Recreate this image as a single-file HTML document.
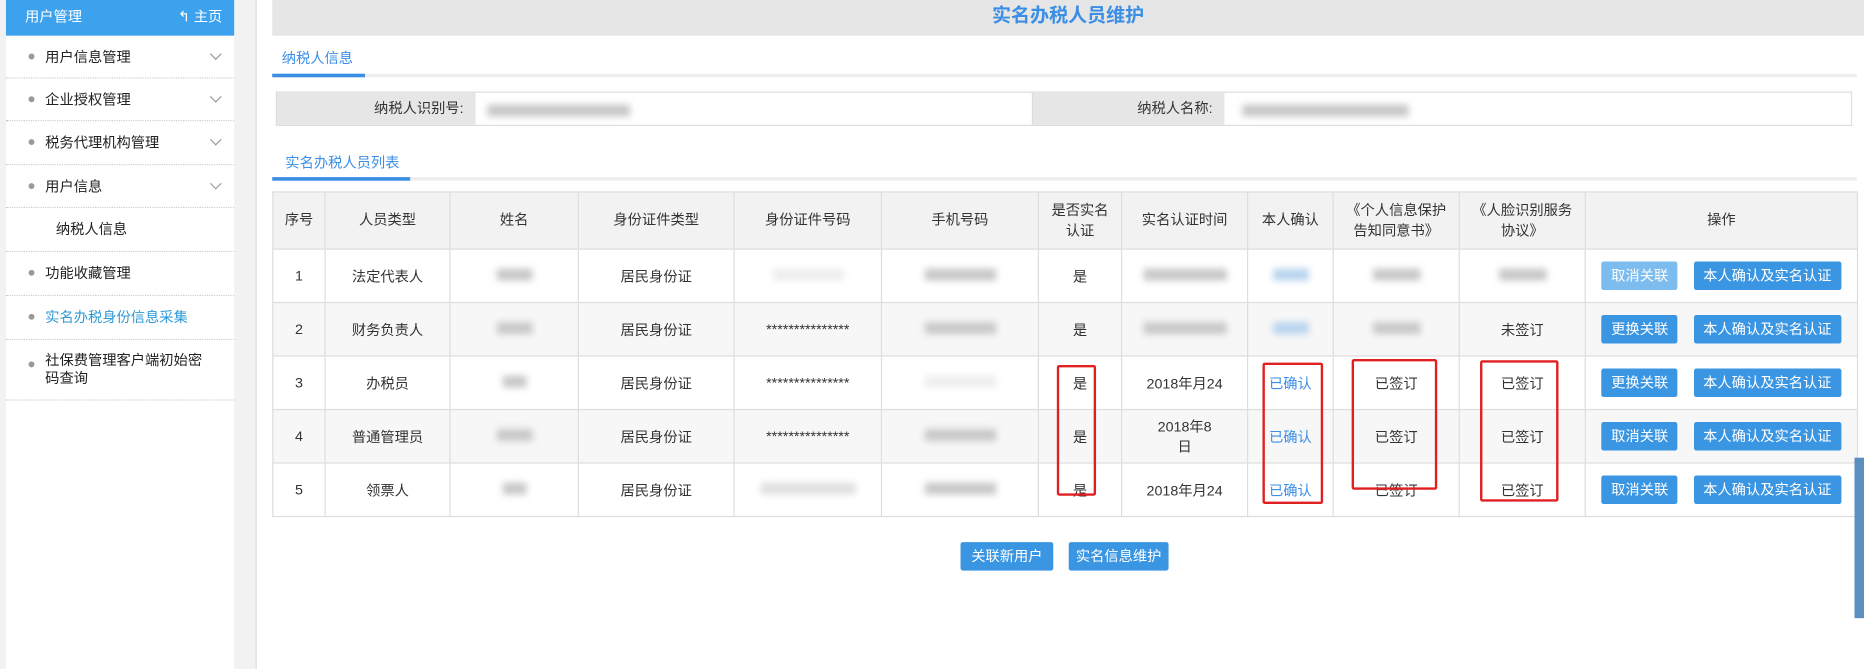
<!DOCTYPE html>
<html><head><meta charset="utf-8"><style>
*{margin:0;padding:0;box-sizing:border-box}
html,body{width:1864px;height:669px;overflow:hidden;background:#f2f2f2}
body{font-family:"Liberation Sans","Noto Sans CJK SC",sans-serif;font-size:12px;color:#333}
#w{position:absolute;left:0;top:0;width:1568px;height:563px;transform:scale(1.18878);transform-origin:0 0;background:#f2f2f2}
.a{position:absolute}
.side{left:5px;top:0;width:192px;height:563px;background:#fff}
.sh{left:0;top:0;width:192px;height:30px;background:#3ca2ee;color:#fff;font-size:12px;line-height:28px;padding-left:16px}
.it{position:absolute;left:0;width:192px;border-bottom:1px dotted #ccc;padding-left:33px;font-size:12px;color:#222}
.it:before{content:"";position:absolute;left:19px;top:50%;margin-top:-3px;width:5px;height:5px;border-radius:50%;background:#999}
.it.nb:before{display:none}
.it.tw:before{top:18px;margin-top:0}
.chev{position:absolute;right:12px;top:50%;margin-top:-6px;width:7px;height:7px;border-right:1px solid #999;border-bottom:1px solid #999;transform:rotate(45deg)}
.main{left:215px;top:0;width:1353px;height:563px;background:#fff;border-left:1px solid #ddd}
.bl{background:#e6e6e6}
table{border-collapse:collapse;position:absolute;left:229px;top:161px;width:1334px}
td,th{border:1px solid #ddd;text-align:center;font-weight:normal;font-size:12px;color:#333}
th{background:#f2f2f2;height:48px;line-height:17px}
td{height:45px;background:#fff}
tr.g td{background:#f7f7f7}
.btn{display:inline-block;background:#3a96e2;color:#fff;border-radius:2px;height:24px;line-height:24px;padding:0 8px;font-size:12px}
.lt{background:#7cbcee}
.blur{display:inline-block;background:#c8c8c8;filter:blur(3px);height:10px}
.red{position:absolute;border:2px solid #e02020;border-radius:2px}
.lk{color:#3a8ee6}
</style></head><body><div id="w">
<div class="a side">
<div class="a sh">用户管理<span style="position:absolute;right:10px">&#x21B0; 主页</span></div>
<div class="it" style="top:30px;height:36px;line-height:36px">用户信息管理<i class="chev"></i></div>
<div class="it" style="top:66px;height:36px;line-height:36px">企业授权管理<i class="chev"></i></div>
<div class="it" style="top:102px;height:37px;line-height:37px">税务代理机构管理<i class="chev"></i></div>
<div class="it" style="top:139px;height:36px;line-height:36px">用户信息<i class="chev"></i></div>
<div class="it nb" style="top:175px;height:37px;line-height:37px;padding-left:42px">纳税人信息</div>
<div class="it" style="top:212px;height:37px;line-height:37px">功能收藏管理</div>
<div class="it" style="top:249px;height:37px;line-height:37px;color:#2e9ad6">实名办税身份信息采集</div>
<div class="it tw" style="top:286px;height:51px;padding-top:10px;line-height:15px;padding-right:20px">社保费管理客户端初始密码查询</div>
</div>
<div class="a main"></div>
<div class="a bl" style="left:229px;top:0;width:1339px;height:30px;text-align:center;line-height:28px;font-size:16px;font-weight:bold;color:#3a8ee6">实名办税人员维护</div>
<div class="a lk" style="left:237px;top:40px;font-size:12px">纳税人信息</div>
<div class="a" style="left:229px;top:62px;width:1333px;height:3px;background:#eee"></div>
<div class="a" style="left:229px;top:62px;width:78px;height:3px;background:#3a8ee6"></div>
<div class="a" style="left:232px;top:77px;width:1326px;height:29px;border:1px solid #ddd;background:#fff"></div>
<div class="a bl" style="left:233px;top:78px;width:167px;height:27px;text-align:right;line-height:27px;padding-right:10px">纳税人识别号:</div>
<div class="a" style="left:410px;top:87px"><span class="blur" style="width:120px"></span></div>
<div class="a bl" style="left:868px;top:78px;width:162px;height:27px;text-align:right;line-height:27px;padding-right:10px;border-left:1px solid #ddd">纳税人名称:</div>
<div class="a" style="left:1045px;top:87px"><span class="blur" style="width:140px"></span></div>
<div class="a lk" style="left:240px;top:128px">实名办税人员列表</div>
<div class="a" style="left:229px;top:149px;width:1333px;height:3px;background:#eee"></div>
<div class="a" style="left:229px;top:149px;width:116px;height:3px;background:#3a8ee6"></div>
<table>
<tr><th style="width:44px">序号</th><th style="width:105px">人员类型</th><th style="width:108px">姓名</th><th style="width:131px">身份证件类型</th><th style="width:124px">身份证件号码</th><th style="width:132px">手机号码</th><th style="width:70px">是否实名<br>认证</th><th style="width:106px">实名认证时间</th><th style="width:72px">本人确认</th><th style="width:106px">《个人信息保护<br>告知同意书》</th><th style="width:106px">《人脸识别服务<br>协议》</th><th>操作</th></tr>
<tr><td>1</td><td>法定代表人</td><td><span class="blur" style="width:30px"></span></td><td>居民身份证</td><td><span class="blur" style="width:60px;background:#eee"></span></td><td><span class="blur" style="width:60px"></span></td><td>是</td><td><span class="blur" style="width:70px"></span></td><td><span class="blur" style="width:30px;background:#b8d4ee"></span></td><td><span class="blur" style="width:40px"></span></td><td><span class="blur" style="width:40px"></span></td><td><span class="btn lt">取消关联</span>&nbsp;&nbsp;&nbsp;&nbsp;<span class="btn">本人确认及实名认证</span></td></tr>
<tr class="g"><td>2</td><td>财务负责人</td><td><span class="blur" style="width:30px"></span></td><td>居民身份证</td><td>***************</td><td><span class="blur" style="width:60px"></span></td><td>是</td><td><span class="blur" style="width:70px"></span></td><td><span class="blur" style="width:30px;background:#b8d4ee"></span></td><td><span class="blur" style="width:40px"></span></td><td>未签订</td><td><span class="btn">更换关联</span>&nbsp;&nbsp;&nbsp;&nbsp;<span class="btn">本人确认及实名认证</span></td></tr>
<tr><td>3</td><td>办税员</td><td><span class="blur" style="width:20px"></span></td><td>居民身份证</td><td>***************</td><td><span class="blur" style="width:60px;background:#eee"></span></td><td>是</td><td>2018年月24</td><td class="lk">已确认</td><td>已签订</td><td>已签订</td><td><span class="btn">更换关联</span>&nbsp;&nbsp;&nbsp;&nbsp;<span class="btn">本人确认及实名认证</span></td></tr>
<tr class="g"><td>4</td><td>普通管理员</td><td><span class="blur" style="width:30px"></span></td><td>居民身份证</td><td>***************</td><td><span class="blur" style="width:60px"></span></td><td>是</td><td>2018年8<br>日</td><td class="lk">已确认</td><td>已签订</td><td>已签订</td><td><span class="btn">取消关联</span>&nbsp;&nbsp;&nbsp;&nbsp;<span class="btn">本人确认及实名认证</span></td></tr>
<tr><td>5</td><td>领票人</td><td><span class="blur" style="width:20px"></span></td><td>居民身份证</td><td><span class="blur" style="width:80px;background:#e0e0e0"></span></td><td><span class="blur" style="width:60px"></span></td><td>是</td><td>2018年月24</td><td class="lk">已确认</td><td>已签订</td><td>已签订</td><td><span class="btn">取消关联</span>&nbsp;&nbsp;&nbsp;&nbsp;<span class="btn">本人确认及实名认证</span></td></tr>
</table>
<div class="red" style="left:889px;top:307px;width:33px;height:110px"></div>
<div class="red" style="left:1062px;top:305px;width:51px;height:119px"></div>
<div class="red" style="left:1137px;top:302px;width:72px;height:110px"></div>
<div class="red" style="left:1245px;top:303px;width:66px;height:119px"></div>
<div class="a btn" style="left:808px;top:456px;padding:0 9px">关联新用户</div>
<div class="a btn" style="left:899px;top:456px;padding:0 6px">实名信息维护</div>
<div class="a" style="left:1560px;top:385px;width:8px;height:135px;background:#5a8fc0"></div>
</div></body></html>
